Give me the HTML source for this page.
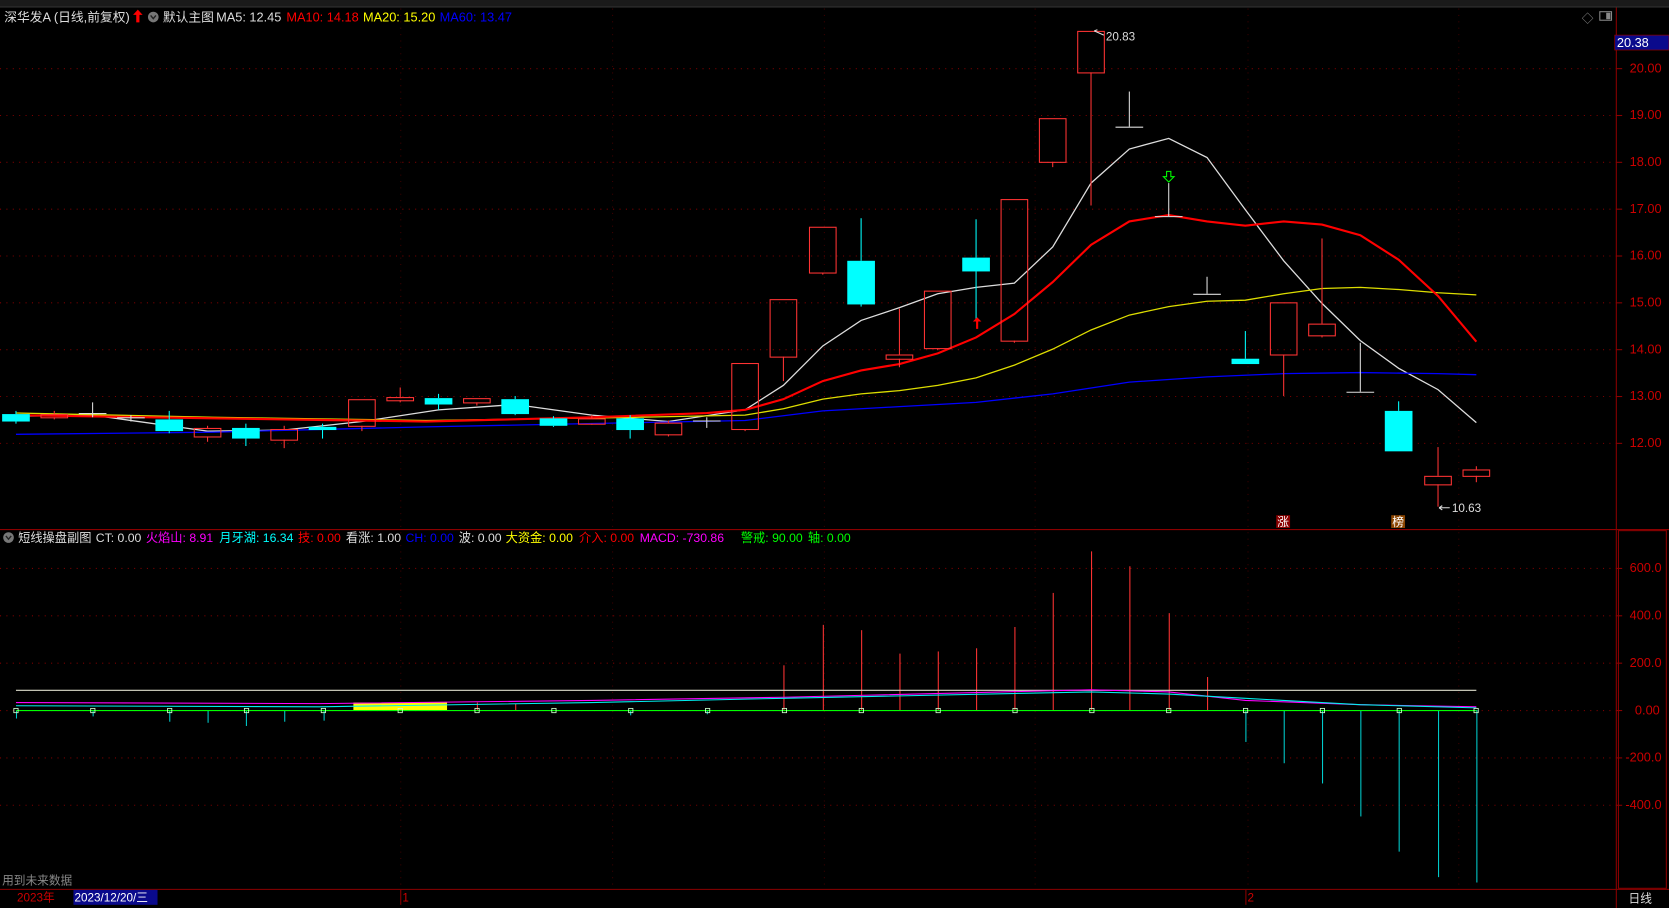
<!DOCTYPE html>
<html><head><meta charset="utf-8">
<style>
html,body{margin:0;padding:0;background:#000;overflow:hidden}
svg{display:block}
text{font-family:"Liberation Sans","Noto Sans CJK SC",sans-serif;}
</style></head>
<body>
<svg id="s" width="1669" height="908" viewBox="0 0 1568 853" preserveAspectRatio="none" xmlns="http://www.w3.org/2000/svg">
<rect x="0" y="0" width="1568" height="853" fill="#000"/>
<rect x="0" y="0" width="1568" height="6" fill="#1a1a1a"/>
<line x1="0" y1="6.5" x2="1568" y2="6.5" stroke="#333" stroke-width="1"/>
<g id="grid"></g>
<line x1="1518.5" y1="7" x2="1518.5" y2="853" stroke="#8b0000" stroke-width="1"/>
<line x1="0" y1="497.5" x2="1568" y2="497.5" stroke="#8b0000" stroke-width="1"/>
<line x1="0" y1="835.5" x2="1568" y2="835.5" stroke="#8b0000" stroke-width="1"/>
<rect x="1520.5" y="498.5" width="45" height="336" fill="none" stroke="#8b0000" stroke-width="1"/>
<rect x="1517" y="33" width="51" height="14" fill="#0a0a8c" stroke="#8b0000" stroke-width="0.7"/>
<text x="1519" y="44" font-size="12" fill="#fff">20.38</text>
<g id="axis" font-size="12" fill="#cc0000"></g>
<g id="ma" fill="none"></g>
<g id="candles"></g>
<g id="sub"></g>
<!-- title -->
<text x="4" y="20" font-size="12" fill="#ddd">深华发A (日线,前复权)</text>
<path d="M128 21 L128 14 L125 14 L129.5 9 L134 14 L131 14 L131 21 Z" fill="#f00"/>
<circle cx="144" cy="16" r="5" fill="#777"/><path d="M141.5 14.5 L144 17.5 L146.5 14.5" stroke="#222" stroke-width="1.3" fill="none"/>
<text x="153" y="20" font-size="12" fill="#ddd">默认主图</text>
<text x="203" y="20" font-size="12" fill="#ddd">MA5: 12.45</text>
<text x="269" y="20" font-size="12" fill="#f00">MA10: 14.18</text>
<text x="341" y="20" font-size="12" fill="#ff0">MA20: 15.20</text>
<text x="413" y="20" font-size="12" fill="#00f">MA60: 13.47</text>
<text x="1486" y="21" font-size="11" fill="#888">◇</text>
<rect x="1503" y="11" width="11" height="8" fill="none" stroke="#888" stroke-width="1"/><rect x="1509" y="12" width="4" height="6" fill="#888"/>
<!-- annotations -->
<text x="1039" y="38" font-size="11" fill="#ddd">20.83</text>
<path d="M1037 33 L1028 29 M1028 29 L1031 28" stroke="#ddd" fill="none"/>
<text x="1364" y="481" font-size="11" fill="#ddd">10.63</text>
<path d="M1362 477 L1352 477 M1352 477 L1355 475 M1352 477 L1355 479" stroke="#ddd" fill="none"/>
<path d="M917 309 L917 302 L914 302 L918 298 L922 302 L919 302 L919 309 Z" fill="#f00"/>
<path d="M1096 161 L1096 166 L1093 166 L1098 171 L1103 166 L1100 166 L1100 161 Z" fill="none" stroke="#0f0" stroke-width="1"/>
<rect x="1199" y="484" width="13" height="12" fill="#8b0000"/><text x="1200" y="494" font-size="11" fill="#fff">涨</text>
<rect x="1307" y="484" width="13" height="12" fill="#8b4500"/><text x="1308" y="494" font-size="11" fill="#fff">榜</text>
<!-- sub title -->
<circle cx="8" cy="505" r="5" fill="#777"/><path d="M5.5 503.5 L8 506.5 L10.5 503.5" stroke="#222" stroke-width="1.3" fill="none"/>
<g font-size="11.5">
<text x="17" y="509" fill="#ddd">短线操盘副图</text>
<text x="90" y="509" fill="#ddd">CT: 0.00</text>
<text x="137" y="509" fill="#f0f">火焰山: 8.91</text>
<text x="206" y="509" fill="#0ff">月牙湖: 16.34</text>
<text x="280" y="509" fill="#f00">技: 0.00</text>
<text x="325" y="509" fill="#ddd">看涨: 1.00</text>
<text x="381" y="509" fill="#00f">CH: 0.00</text>
<text x="431" y="509" fill="#ddd">波: 0.00</text>
<text x="475" y="509" fill="#ff0">大资金: 0.00</text>
<text x="544" y="509" fill="#f00">介入: 0.00</text>
<text x="601" y="509" fill="#f0f">MACD: -730.86</text>
<text x="696" y="509" fill="#0f0">警戒: 90.00</text>
<text x="759" y="509" fill="#0f0">轴: 0.00</text>
</g>
<text x="2" y="831" font-size="11" fill="#888">用到未来数据</text>
<text x="16" y="847" font-size="11" fill="#cc0000">2023年</text>
<rect x="69" y="836" width="79" height="14" fill="#0a0a8c"/>
<text x="70" y="847" font-size="11" fill="#fff">2023/12/20/三</text>
<line x1="376.5" y1="836" x2="376.5" y2="850" stroke="#8b0000"/><text x="378" y="847" font-size="11" fill="#cc0000">1</text>
<line x1="1170.5" y1="836" x2="1170.5" y2="850" stroke="#8b0000"/><text x="1172" y="847" font-size="11" fill="#cc0000">2</text>
<text x="1530" y="848" font-size="11" fill="#ddd">日线</text>
</svg>
<script>
const NS="http://www.w3.org/2000/svg";
function el(p,t,a){const e=document.createElementNS(NS,t);for(const k in a)e.setAttribute(k,a[k]);document.getElementById(p).appendChild(e);return e;}
// grid
const py=v=>64+(20-v)*44;
for(let v=12;v<=20;v++){el('grid','line',{x1:0,x2:1518,y1:py(v)+.5,y2:py(v)+.5,stroke:'#7a0000','stroke-dasharray':'1 5','stroke-width':1});
 const t=el('axis','text',{x:1531,y:py(v)+4});t.textContent=v.toFixed(2);
 el('axis','line',{x1:1518,x2:1524,y1:py(v)+.5,y2:py(v)+.5,stroke:'#8b0000'});}
const sy=v=>667-v*0.2225;
[600,400,200,0,-200,-400].forEach(v=>{el('grid','line',{x1:0,x2:1518,y1:sy(v)+.5,y2:sy(v)+.5,stroke:'#7a0000','stroke-dasharray':'1 5','stroke-width':1});
 const t=el('axis','text',{x:v<0?1527:(v==0?1536:1531),y:sy(v)+4});t.textContent=v==0?'0.00':v.toFixed(1);
 el('axis','line',{x1:1518,x2:1524,y1:sy(v)+.5,y2:sy(v)+.5,stroke:'#8b0000'});});
[376,575,774,972,1172,1370].forEach(x=>{el('grid','line',{x1:x+.5,x2:x+.5,y1:8,y2:835,stroke:'#3a0000','stroke-dasharray':'1 5'});});
// MAs
const ma={
'#ddd':[[15,391],[87,390],[195,405],[267,404],[340,396],[412,385],[484,380],[556,390],[628,396],[700,385],[736,362],[773,325],[809,301],[845,289],[881,276],[917,270],[953,266],[989,232],[1025,172],[1061,140],[1098,130],[1134,148],[1170,197],[1206,245],[1242,285],[1278,320],[1314,346],[1351,366],[1387,397]],
'#00f':[[15,408],[200,406],[400,401],[600,397],[700,395],[773,386],[845,382],[917,378],[989,370],[1061,359],[1134,354],[1206,351],[1278,350],[1351,351],[1387,352]],
'#dd0':[[15,388],[200,392],[400,395],[600,392],[700,390],[736,384],[773,375],[809,370],[845,367],[881,362],[917,355],[953,343],[989,328],[1025,310],[1061,296],[1098,288],[1134,283],[1170,282],[1206,276],[1242,271],[1278,270],[1314,272],[1351,275],[1387,277]],
'#f00':[[15,390],[200,393],[400,396],[556,392],[664,388],[700,385],[736,375],[773,358],[809,348],[845,342],[881,332],[917,317],[953,295],[989,265],[1025,230],[1061,208],[1098,202],[1134,208],[1170,212],[1206,208],[1242,211],[1278,221],[1314,244],[1351,278],[1387,321]]};
for(const c in ma)el('ma','polyline',{points:ma[c].map(p=>p.join(',')).join(' '),stroke:c,'stroke-width':c=='#f00'?2:1.2});
// candles [x, top, bottom, high, low, type]  type: r=red hollow, c=cyan, x=cross(white)
const C=[[15,389,396,386,398,'c'],[51,389,392,386,394,'r'],[87,388,390,378,392,'x'],[123,392,394,390,396,'x'],[159,394,405,386,407,'c'],[195,402,410,400,415,'r'],[231,402,412,398,419,'c'],[267,403,413,400,421,'r'],[303,401,404,398,412,'c'],[340,375,400,375,405,'r'],[376,373,376,364,378,'r'],[412,374,380,370,385,'c'],[448,374,378,374,381,'r'],[484,375,389,372,390,'c'],[520,393,400,391,401,'c'],[556,393,398,390,399,'r'],[592,393,404,390,412,'c'],[628,397,408,395,410,'r'],[664,395,398,392,402,'x'],[700,341,403,341,405,'r'],[736,281,335,281,358,'r'],[773,213,256,213,258,'r'],[809,245,286,205,288,'c'],[845,333,337,290,345,'r'],[881,273,327,273,329,'r'],[917,242,255,206,300,'c'],[953,187,320,187,322,'r'],[989,111,152,111,157,'r'],[1025,29,68,29,193,'r'],[1061,119,119,86,119,'x'],[1098,203,203,172,203,'x'],[1134,276,276,260,276,'x'],[1170,337,342,311,342,'c'],[1206,284,333,284,372,'r'],[1242,304,315,224,317,'r'],[1278,368,368,322,368,'x'],[1314,386,424,377,424,'c'],[1351,447,455,420,476,'r'],[1387,441,447,438,453,'r']];
C.forEach(([x,t,b,h,l,k])=>{
 const col=k=='r'?'#f33':(k=='c'?'#0ff':'#ddd');
 if(k=='x'){el('candles','line',{x1:x,x2:x,y1:h,y2:l,stroke:col});el('candles','line',{x1:x-13,x2:x+13,y1:t+.5,y2:t+.5,stroke:col});return;}
 el('candles','line',{x1:x,x2:x,y1:h,y2:t,stroke:col});el('candles','line',{x1:x,x2:x,y1:b,y2:l,stroke:col});
 if(k=='r')el('candles','rect',{x:x-12.5,y:t+.5,width:25,height:Math.max(b-t,2),fill:'none',stroke:col});
 else el('candles','rect',{x:x-13,y:t,width:26,height:Math.max(b-t,2),fill:col});
});
// sub chart
el('sub','rect',{x:332,y:660,width:88,height:7,fill:'#ff0'});
const up={736:625,773:587,809:592,845:614,881:612,917:609,953:589,989:557,1025:518,1061:532,1098:576,1134:636,448:660,484:661};
const dn={1170:697,1206:717,1242:736,1278:767,1314:800,1351:824,1387:829,15:675,87:673,159:678,195:679,231:682,267:678,304:677,592:672,664:671};
for(const x in up)el('sub','line',{x1:+x+.5,x2:+x+.5,y1:667,y2:up[x],stroke:'#f33'});
for(const x in dn)el('sub','line',{x1:+x+.5,x2:+x+.5,y1:667,y2:dn[x],stroke:'#0cc'});
el('sub','line',{x1:15,x2:1387,y1:648.5,y2:648.5,stroke:'#ddc'});
el('sub','polyline',{points:'15,660 300,661 556,658 736,655 1025,648 1098,650 1170,658 1278,662 1387,664',fill:'none',stroke:'#f0f'});
el('sub','polyline',{points:'15,663 300,664 556,660 736,656 1025,650 1098,652 1170,656 1278,662 1387,665',fill:'none',stroke:'#0ee'});
el('sub','line',{x1:15,x2:1387,y1:667.5,y2:667.5,stroke:'#0f0'});
for(let i=0;i<39;i+=2){const x=15+i*36.1;el('sub','rect',{x:x-2,y:665.5,width:4,height:4,fill:'none',stroke:'#cfc','stroke-width':0.8});}
</script>
</body></html>
